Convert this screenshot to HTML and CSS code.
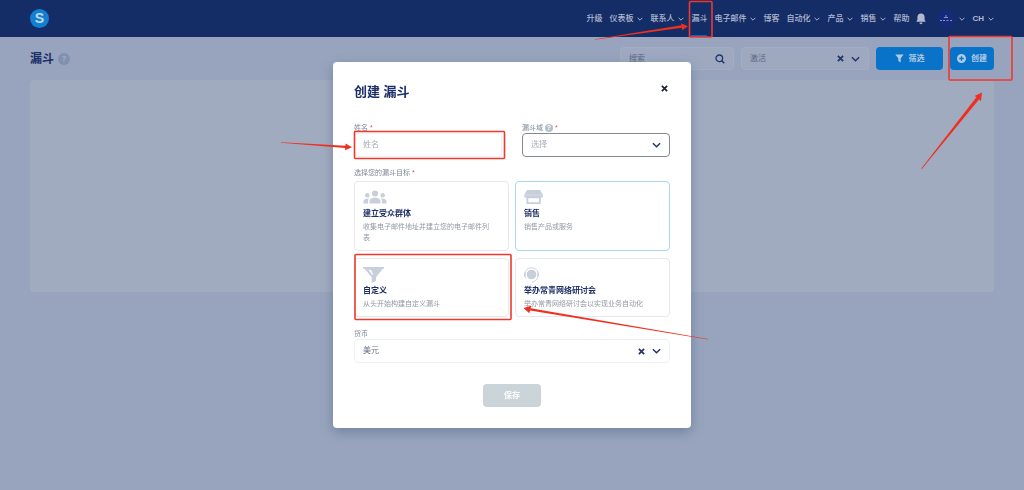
FILE: index.html
```html
<!DOCTYPE html>
<html lang="zh-CN">
<head>
  <meta charset="UTF-8">
  <meta name="viewport" content="width=device-width, initial-scale=1.0">
  <title>漏斗</title>
  <link rel="stylesheet" href="styles.css">
</head>
<body>
  <svg class="symbols" width="0" height="0">
    <symbol id="chevron" viewBox="0 0 10 6"><path d="M1 1l4 4 4-4" fill="none" stroke="currentColor" stroke-width="1.6"/></symbol>
    <symbol id="cross" viewBox="0 0 8 8"><path d="M1 1l6 6M7 1L1 7" fill="none" stroke="currentColor" stroke-width="2"/></symbol>
  </svg>

  <header class="header">
    <a class="logo" href="#">S</a>
    <nav class="nav">
      <a href="#">升级</a>
      <a href="#">仪表板<svg class="caret"><use href="#chevron"/></svg></a>
      <a href="#">联系人<svg class="caret"><use href="#chevron"/></svg></a>
      <a href="#" class="active">漏斗</a>
      <a href="#">电子邮件<svg class="caret"><use href="#chevron"/></svg></a>
      <a href="#">博客</a>
      <a href="#">自动化<svg class="caret"><use href="#chevron"/></svg></a>
      <a href="#">产品<svg class="caret"><use href="#chevron"/></svg></a>
      <a href="#">销售<svg class="caret"><use href="#chevron"/></svg></a>
      <a href="#">帮助</a>
      <a href="#" aria-label="通知"><svg class="bell" viewBox="0 0 10 12"><path d="M5 0.5c-2.300 0-3.600 1.700-3.600 3.800v2.400L0.300 8.800h9.400L8.600 6.700V4.300C8.600 2.200 7.300 0.500 5 0.500zM3.500 9.600h3c0 1-.6 1.700-1.500 1.700s-1.500-.7-1.500-1.700z" fill="currentColor"/></svg></a>
      <a href="#" class="account" aria-label="账户">
        <svg class="avatar" viewBox="0 0 18 18"><circle cx="9" cy="9" r="9" fill="#162a7a"/><path d="M7 7.500h4M8 6h2M3 10.500h2M6 10.500h2M9.500 10.500h2M13 10.500h2" stroke="#8993bd" stroke-width="1.200"/></svg>
        <svg class="caret"><use href="#chevron"/></svg>
      </a>
      <a href="#" class="lang">CH<svg class="caret"><use href="#chevron"/></svg></a>
    </nav>
  </header>

  <main class="page">
    <div class="toolbar">
      <h1 class="page-title">漏斗</h1>
      <span class="help">?</span>
      <div class="field search">
        <input type="text" placeholder="搜索" aria-label="搜索">
        <svg class="magnifier" viewBox="0 0 10 10"><circle cx="4.300" cy="4.300" r="3.300" fill="none" stroke="currentColor" stroke-width="1.300"/><path d="M6.700 6.700L9.300 9.300" stroke="currentColor" stroke-width="1.500"/></svg>
      </div>
      <div class="field status">
        <select aria-label="状态"><option>激活</option></select>
        <button class="clear" aria-label="清除"><svg class="cross"><use href="#cross"/></svg></button>
        <svg class="arrow"><use href="#chevron"/></svg>
      </div>
      <button class="btn btn-filter">
        <svg class="btn-icon" viewBox="0 0 9 9"><path d="M0.300 0.500h8.400L5.700 4.300v4.200L3.300 7V4.300z" fill="currentColor"/></svg>筛选
      </button>
      <button class="btn btn-create">
        <svg class="btn-icon" viewBox="0 0 9 9"><path fill-rule="evenodd" d="M4.500 0a4.500 4.500 0 1 0 0 9a4.500 4.500 0 0 0 0-9zM3.800 2.200h1.400v1.600h1.600v1.400H5.200v1.600H3.800V5.200H2.200V3.800h1.600z" fill="currentColor"/></svg>创建
      </button>
    </div>
    <section class="panel"></section>
  </main>

  <div class="overlay">
    <form class="modal" role="dialog" aria-labelledby="modal-title">
      <div class="modal-head">
        <h2 id="modal-title">创建 漏斗</h2>
        <button type="button" class="close" aria-label="关闭"><svg class="cross"><use href="#cross"/></svg></button>
      </div>

      <div class="row">
        <div class="form-group">
          <label for="name">姓名<span class="required"> *</span></label>
          <div class="field"><input type="text" id="name" placeholder="姓名"></div>
        </div>
        <div class="form-group">
          <label for="domain">漏斗域 <span class="help help-small">?</span><span class="required"> *</span></label>
          <div class="field focused">
            <select id="domain" class="empty"><option>选择</option></select>
            <svg class="arrow"><use href="#chevron"/></svg>
          </div>
        </div>
      </div>

      <fieldset class="goals">
        <legend>选择您的漏斗目标<span class="required"> *</span></legend>
        <div class="cards">
          <label class="card">
            <input type="radio" name="goal">
            <svg class="card-icon" viewBox="0 0 24 14"><g fill="currentColor"><circle cx="12" cy="3.500" r="3.100"/><circle cx="4.300" cy="5.300" r="2.200"/><circle cx="19.700" cy="5.300" r="2.200"/><path d="M6.500 13.500v-2.300c0-2 2.500-3.500 5.500-3.500s5.500 1.500 5.500 3.500v2.300zM0.500 13.500v-2c0-2 2.400-3.200 5.600-2.900-.8.800-1 1.600-1 2.600v2.300zM23.500 13.500v-2c0-2-2.400-3.200-5.600-2.900.8.800 1 1.600 1 2.600v2.300z"/></g></svg>
            <span class="card-title">建立受众群体</span>
            <span class="card-text">收集电子邮件地址并建立您的电子邮件列表</span>
          </label>
          <label class="card">
            <input type="radio" name="goal" checked>
            <svg class="card-icon" viewBox="0 0 24 14"><path d="M3 0h13l3 5c.3 1.800-1 2.800-2.300 2.800V14H2.500V7.800C1 7.800-.2 6.800.2 5zM4.300 8.300v3.900h10.600V8.300z" fill="currentColor" fill-rule="evenodd"/><path d="M.5 5h18" stroke="#dfe4ef" stroke-width=".6"/></svg>
            <span class="card-title">销售</span>
            <span class="card-text">销售产品或服务</span>
          </label>
          <label class="card">
            <input type="radio" name="goal">
            <svg class="card-icon card-icon-tall" viewBox="0 0 24 16"><path d="M0 0h21v1.800h-1.200L13 10.300V14l-4.300 2v-5.700L1.600 1.800H0zM5.500 2.800l3.700 4.900h1.200L8 2.800z" fill="currentColor" fill-rule="evenodd"/></svg>
            <span class="card-title">自定义</span>
            <span class="card-text">从头开始构建自定义漏斗</span>
          </label>
          <label class="card">
            <input type="radio" name="goal">
            <svg class="card-icon card-icon-tall" viewBox="0 0 24 16"><circle cx="7.500" cy="7.500" r="4.800" fill="currentColor"/><path d="M2 11.500a6.800 6.800 0 1 1 11.500-.8c-.8 2.300-2.300 3.700-5.500 4.500" fill="none" stroke="currentColor" stroke-width=".9"/><path d="M.9 5.500v4M14.100 5.500v4" stroke="currentColor" stroke-width="1.400"/></svg>
            <span class="card-title">举办常青网络研讨会</span>
            <span class="card-text">举办常青网络研讨会以实现业务自动化</span>
          </label>
        </div>
      </fieldset>

      <div class="form-group">
        <label for="currency">货币</label>
        <div class="field">
          <select id="currency"><option>美元</option></select>
          <button type="button" class="clear" aria-label="清除"><svg class="cross"><use href="#cross"/></svg></button>
          <svg class="arrow"><use href="#chevron"/></svg>
        </div>
      </div>

      <button class="save" disabled>保存</button>
    </form>
  </div>

  <!-- Guide marks: boxes and arrows over the page -->
  <svg class="marks" viewBox="0 0 1024 490">
    <g fill="none" stroke="#f0382d" stroke-width="1.600">
      <rect x="689.500" y="1.500" width="22.500" height="35.500" rx="1"/>
      <rect x="949" y="36.500" width="63" height="43.500" rx="1"/>
      <rect x="354.500" y="131.500" width="150" height="27" rx="1"/>
      <rect x="355" y="254.500" width="156" height="65" rx="1"/>
    </g>
    <g fill="#f0301f">
      <path d="M595 39.800L595 39.200 681.500 25.300 681 23.300 688 26.300 682 30.300 681.800 27.700z"/>
      <path d="M281 142.700L281 142.200 345.500 145.700 345.500 143.500 352 147.200 345 150.300 345.200 147.900z"/>
      <path d="M921.300 168.500L976.500 97 974.500 96 982 92.500 981 101 979 99.500 921.800 168.900z"/>
      <path d="M708 339.600L530 310.600 529.300 313.200 523.500 308 531.300 305.700 530.700 308.200 708 339z"/>
    </g>
  </svg>
</body>
</html>
```
FILE: styles.css
```css
* {
  box-sizing: border-box;
}

body {
  margin: 0;
  min-height: 100vh;
  font-family: "Liberation Sans", "Noto Sans CJK SC", sans-serif;
  font-size: 8px;
  line-height: 12px;
  color: #1c2f68;
  background: #98a4bd;
}

h1, h2 {
  margin: 0;
}

button, input, select {
  font: inherit;
  color: inherit;
}

.symbols {
  position: absolute;
}

.header {
  display: flex;
  align-items: center;
  justify-content: space-between;
  height: 37px;
  padding: 0 30px;
  background: #142d66;
}

.logo {
  width: 19px;
  height: 19px;
  border-radius: 50%;
  background: #1180d0;
  color: #c5d8ec;
  font-size: 14px;
  font-weight: bold;
  line-height: 19px;
  text-align: center;
  text-decoration: none;
}

.nav {
  display: flex;
  gap: 7px;
  height: 100%;
}

.nav a {
  display: flex;
  align-items: center;
  gap: 4px;
  color: #b0bad1;
  font-weight: 500;
  text-decoration: none;
  border-bottom: 2px solid transparent;
  border-top: 2px solid transparent;
}

.nav .active {
  border-bottom-color: #0e6ab8;
}

.nav .lang {
  font-weight: bold;
}

.caret {
  width: 6px;
  height: 4px;
}

.bell {
  width: 10px;
  height: 12px;
}

.nav .account {
  margin-left: 4px;
}

.avatar {
  width: 18px;
  height: 18px;
}

.page {
  padding: 10px 30px;
}

.toolbar {
  display: flex;
  align-items: center;
  gap: 7px;
}

.page-title {
  font-size: 12px;
  line-height: 18px;
}

.help {
  width: 12px;
  height: 12px;
  margin-left: -3px;
  border-radius: 50%;
  background: #8090af;
  color: #a6b1c7;
  font-weight: bold;
  text-align: center;
}

.help-small {
  display: inline-block;
  width: 8px;
  height: 8px;
  margin: 0;
  background: #b4bfc8;
  color: #fff;
  font-size: 7px;
  line-height: 8px;
}

.field {
  display: flex;
  align-items: center;
  gap: 7px;
  height: 24px;
  padding: 0 8px;
  border: 1px solid #edf0f3;
  border-radius: 4px;
  color: #223569;
}

.field input,
.field select {
  flex: 1;
  min-width: 0;
  padding: 0;
  border: 0;
  outline: 0;
  background: none;
  color: #68738a;
  appearance: none;
}

.field input::placeholder,
.field .empty {
  color: #a8adb6;
}

.toolbar .field {
  height: 23px;
  border-color: #a3adc3;
  background: #9ea9c0;
}

.toolbar .field select,
.toolbar .field input::placeholder {
  color: #5c6885;
}

.search {
  width: 114px;
  margin-left: auto;
}

.status {
  width: 128px;
}

.form-group .focused {
  border-color: #85888c;
}

.magnifier {
  width: 10px;
  height: 10px;
}

.arrow {
  width: 9px;
  height: 6px;
}

.clear, .close {
  display: flex;
  padding: 0;
  border: 0;
  background: none;
}

.cross {
  width: 7px;
  height: 7px;
}

.btn {
  display: flex;
  align-items: center;
  justify-content: center;
  gap: 5px;
  height: 23px;
  padding: 0;
  border: 0;
  border-radius: 4px;
  background: #0873c8;
  color: #b3cae4;
  font-weight: bold;
}

.btn-filter {
  width: 67px;
}

.btn-create {
  width: 44px;
}

.btn-icon {
  width: 9px;
  height: 9px;
}

.panel {
  height: 212px;
  margin-top: 10px;
  border-radius: 4px;
  background: #a1abc0;
}

.overlay {
  position: fixed;
  inset: 0;
  display: flex;
  align-items: center;
  justify-content: center;
}

.modal {
  width: 358px;
  padding: 21px;
  border-radius: 4px;
  background: #fff;
  box-shadow: 0 4px 12px rgba(60, 80, 110, 0.4);
}

.modal-head {
  display: flex;
  align-items: flex-start;
  justify-content: space-between;
  margin-bottom: 23px;
}

.modal-head h2 {
  font-size: 13px;
  line-height: 17px;
}

.close {
  padding: 2px;
  color: #1d2433;
}

.row {
  display: grid;
  grid-template-columns: 1fr 1fr;
  gap: 20px;
}

.form-group label,
.goals legend {
  display: block;
  padding: 0;
  font-size: 7px;
  line-height: 10px;
  color: #7c8799;
}

.form-group .required,
.goals .required {
  color: #e8505b;
}

.goals {
  margin: 11px 0 12px;
  padding: 0;
  border: 0;
}

.goals legend {
  margin-bottom: 3px;
}

.cards {
  display: grid;
  grid-template-columns: 1fr 1fr;
  gap: 7px 6px;
}

.card {
  display: flex;
  flex-direction: column;
  align-items: flex-start;
  padding: 8px 16px 7px 8px;
  border: 1px solid #e6e8ed;
  border-radius: 4px;
}

.card:has(input:checked) {
  border-color: #a9d7ec;
}

.card input {
  position: absolute;
  opacity: 0;
}

.card-icon {
  width: 24px;
  height: 14px;
  margin-bottom: 4px;
  color: #c8cedb;
}

.card-icon-tall {
  height: 16px;
  margin-bottom: 2px;
}

.card-title {
  font-weight: bold;
  margin-bottom: 1px;
}

.card-text {
  font-size: 7px;
  line-height: 11px;
  color: #9298a2;
}

.save {
  display: block;
  width: 58px;
  height: 23px;
  margin: 21px auto 0;
  padding: 0;
  border: 0;
  border-radius: 4px;
  background: #cbd4d8;
  color: #fff;
  font-weight: bold;
}

.marks {
  position: absolute;
  top: 0;
  left: 0;
  width: 100%;
  pointer-events: none;
}
```
